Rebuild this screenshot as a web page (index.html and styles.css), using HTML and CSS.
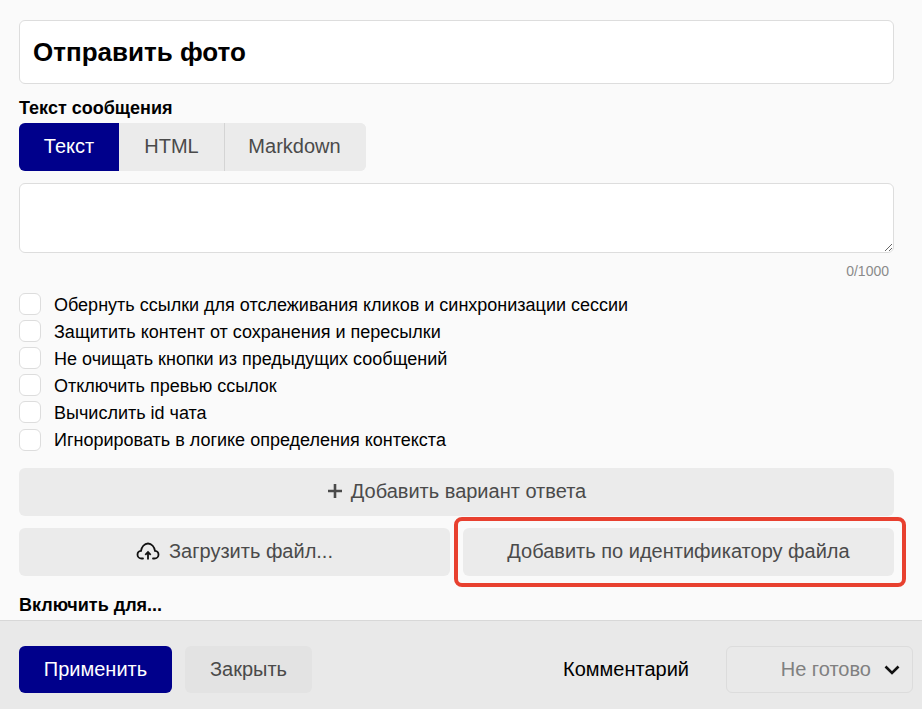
FILE: index.html
```html
<!DOCTYPE html>
<html lang="ru">
<head>
<meta charset="utf-8">
<title>Отправить фото</title>
<link rel="stylesheet" href="styles.css">
</head>
<body>
<div class="page">
  <main class="content">
    <input class="title-input" type="text" value="Отправить фото">
    <div class="field-label">Текст сообщения</div>
    <div class="tabs">
      <button class="tab tab-active" type="button">Текст</button>
      <button class="tab tab-html" type="button">HTML</button>
      <button class="tab tab-md" type="button">Markdown</button>
    </div>
    <textarea class="message"></textarea>
    <div class="counter">0/1000</div>
    <div class="checks">
      <label class="check"><input type="checkbox"><span>Обернуть ссылки для отслеживания кликов и синхронизации сессии</span></label>
      <label class="check"><input type="checkbox"><span>Защитить контент от сохранения и пересылки</span></label>
      <label class="check"><input type="checkbox"><span>Не очищать кнопки из предыдущих сообщений</span></label>
      <label class="check"><input type="checkbox"><span>Отключить превью ссылок</span></label>
      <label class="check"><input type="checkbox"><span>Вычислить id чата</span></label>
      <label class="check"><input type="checkbox"><span>Игнорировать в логике определения контекста</span></label>
    </div>
    <button class="wide-btn add-answer" type="button">
      <svg class="plus" viewBox="0 0 16 16" width="16" height="16" aria-hidden="true"><path d="M8 1v14M1 8h14" stroke="#4a4a4a" stroke-width="2.600" fill="none"/></svg>
      Добавить вариант ответа
    </button>
    <div class="file-row">
      <button class="wide-btn" type="button">
        <svg class="cloud" viewBox="0 0 24 20" width="24" height="20" aria-hidden="true"><path d="M7 17.500H5.600C3.300 17.500 1.500 15.900 1.500 13.700c0-2 1.500-3.600 3.500-3.800C5.500 6 8.300 2.500 12 2.500c3.700 0 6.500 3.500 7 7.400 2 .2 3.500 1.800 3.500 3.800 0 2.200-1.800 3.800-4.100 3.800H17" fill="none" stroke="#111" stroke-width="1.800" stroke-linecap="round"/><path d="M12 18.500v-7M9.300 13.800 12 11l2.700 2.800" fill="none" stroke="#111" stroke-width="1.800"/></svg>
        Загрузить файл...
      </button>
      <button class="wide-btn" type="button">Добавить по идентификатору файла</button>
    </div>
    <div class="field-label enable-label">Включить для...</div>
    <div class="annotation" aria-hidden="true"></div>
  </main>
  <footer class="footer">
    <button class="btn-primary" type="button">Применить</button>
    <button class="btn-close" type="button">Закрыть</button>
    <span class="comment">Комментарий</span>
    <div class="status">
      <span>Не готово</span>
      <svg viewBox="0 0 16 10" width="16" height="10" aria-hidden="true"><path d="M1.500 1.500 8 8l6.500-6.500" fill="none" stroke="#111" stroke-width="2.600"/></svg>
    </div>
  </footer>
</div>
</body>
</html>
```

FILE: styles.css
```css
* { box-sizing: border-box; }
html, body { margin: 0; padding: 0; height: 100%; }
body {
  font-family: "Liberation Sans", Arial, sans-serif;
  background: #fafafa;
  color: #000;
  overflow: hidden;
}
button, input, textarea { font-family: inherit; }
.page {
  height: 709px;
  display: flex;
  flex-direction: column;
}
.content {
  position: relative;
  flex: 1;
  min-height: 0;
  overflow: hidden;
  padding: 20px 28px 0 19px;
}
.title-input {
  display: block;
  width: 100%;
  height: 64px;
  padding: 0 13px;
  background: #fff;
  border: 1px solid #ddd;
  border-radius: 6px;
  font-size: 26px;
  font-weight: 700;
  color: #000;
  outline: none;
}
.field-label {
  font-size: 18px;
  font-weight: 700;
  line-height: 18px;
  margin-top: 15px;
}
.tabs {
  display: flex;
  width: 347px;
  height: 48px;
  margin-top: 6px;
  border-radius: 6px;
  overflow: hidden;
  background: #ebebeb;
}
.tab {
  border: 0;
  padding: 0 0 2px;
  font-size: 20px;
  color: #4a4a4a;
  background: #ebebeb;
}
.tab-active { width: 100px; background: #00008b; color: #fff; }
.tab-html { width: 106px; border-right: 1px solid #d4d4d4; }
.tab-md { flex: 1; padding-right: 2px; }
.message {
  display: block;
  width: 100%;
  height: 70px;
  margin-top: 12px;
  padding: 8px 13px;
  background: #fff;
  border: 1px solid #ddd;
  border-radius: 6px;
  outline: none;
  resize: vertical;
}
.counter {
  font-size: 14px;
  line-height: 15px;
  color: #8a8a8a;
  text-align: right;
  padding-right: 5px;
  margin-top: 11px;
}
.checks {
  display: flex;
  flex-direction: column;
  margin-top: 12px;
}
.check {
  display: flex;
  align-items: flex-start;
  height: 27px;
  font-size: 18px;
  line-height: 29px;
}
.check input {
  appearance: none;
  flex: none;
  width: 22px;
  height: 22px;
  margin: 2px 13px 0 0;
  background: #fff;
  border: 1px solid #ddd;
  border-radius: 6px;
}
.check:last-child input { margin-top: 3px; }
.wide-btn {
  display: flex;
  align-items: center;
  justify-content: center;
  gap: 9px;
  width: 100%;
  height: 48px;
  padding: 0 0 2px;
  border: 0;
  border-radius: 6px;
  background: #ebebeb;
  color: #4a4a4a;
  font-size: 20px;
}
.add-answer { margin-top: 15px; gap: 8px; }
.file-row {
  display: flex;
  gap: 13px;
  margin-top: 12px;
}
.file-row .wide-btn { flex: 1; min-width: 0; }
.enable-label { margin-top: 20px; }
.annotation {
  position: absolute;
  left: 454px;
  top: 517px;
  width: 452px;
  height: 70px;
  border: 4px solid #e8402f;
  border-radius: 8px;
  pointer-events: none;
}
.footer {
  flex: none;
  display: flex;
  align-items: center;
  height: 89px;
  padding: 25px 9px 16px 19px;
  background: #e9e9e9;
  border-top: 1px solid #d8d8d8;
}
.btn-primary, .btn-close {
  height: 47px;
  border: 0;
  border-radius: 6px;
  font-size: 20px;
}
.btn-primary { width: 153px; background: #00008b; color: #fff; }
.btn-close { width: 127px; margin-left: 13px; background: #e3e3e3; color: #4a4a4a; }
.comment {
  margin-left: auto;
  font-size: 20px;
  color: #000;
}
.status {
  display: flex;
  align-items: center;
  justify-content: flex-end;
  gap: 13px;
  width: 187px;
  height: 47px;
  margin-left: 37px;
  padding-right: 12px;
  border: 1px solid #dcdcdc;
  border-radius: 6px;
  font-size: 20px;
  color: #808080;
}
```
